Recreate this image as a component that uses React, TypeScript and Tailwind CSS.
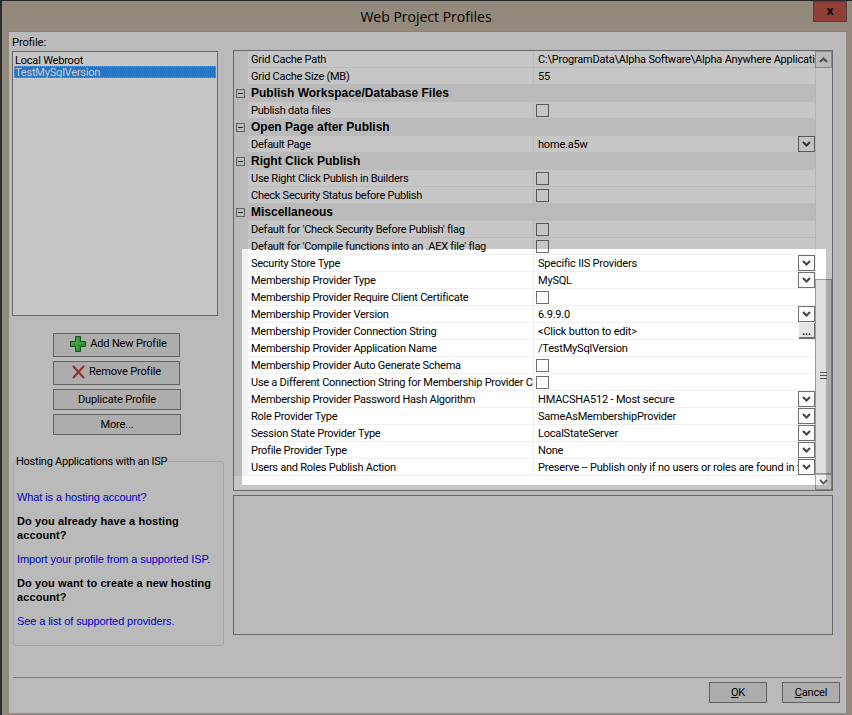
const ui = "font-['Roboto',sans-serif]";

type Row =
  | { kind: 'cat'; label: string }
  | { kind: 'prop'; label: string; value?: string; control?: 'check' | 'drop' | 'dots' };

const rows: Row[] = [
  { kind: 'prop', label: 'Grid Cache Path', value: 'C:\\ProgramData\\Alpha Software\\Alpha Anywhere Application Server' },
  { kind: 'prop', label: 'Grid Cache Size (MB)', value: '55' },
  { kind: 'cat', label: 'Publish Workspace/Database Files' },
  { kind: 'prop', label: 'Publish data files', control: 'check' },
  { kind: 'cat', label: 'Open Page after Publish' },
  { kind: 'prop', label: 'Default Page', value: 'home.a5w', control: 'drop' },
  { kind: 'cat', label: 'Right Click Publish' },
  { kind: 'prop', label: 'Use Right Click Publish in Builders', control: 'check' },
  { kind: 'prop', label: 'Check Security Status before Publish', control: 'check' },
  { kind: 'cat', label: 'Miscellaneous' },
  { kind: 'prop', label: "Default for 'Check Security Before Publish' flag", control: 'check' },
  { kind: 'prop', label: "Default for 'Compile functions into an .AEX file' flag", control: 'check' },
  { kind: 'prop', label: 'Security Store Type', value: 'Specific IIS Providers', control: 'drop' },
  { kind: 'prop', label: 'Membership Provider Type', value: 'MySQL', control: 'drop' },
  { kind: 'prop', label: 'Membership Provider Require Client Certificate', control: 'check' },
  { kind: 'prop', label: 'Membership Provider Version', value: '6.9.9.0', control: 'drop' },
  { kind: 'prop', label: 'Membership Provider Connection String', value: '<Click button to edit>', control: 'dots' },
  { kind: 'prop', label: 'Membership Provider Application Name', value: '/TestMySqlVersion' },
  { kind: 'prop', label: 'Membership Provider Auto Generate Schema', control: 'check' },
  { kind: 'prop', label: 'Use a Different Connection String for Membership Provider Configuration', control: 'check' },
  { kind: 'prop', label: 'Membership Provider Password Hash Algorithm', value: 'HMACSHA512 - Most secure', control: 'drop' },
  { kind: 'prop', label: 'Role Provider Type', value: 'SameAsMembershipProvider', control: 'drop' },
  { kind: 'prop', label: 'Session State Provider Type', value: 'LocalStateServer', control: 'drop' },
  { kind: 'prop', label: 'Profile Provider Type', value: 'None', control: 'drop' },
  { kind: 'prop', label: 'Users and Roles Publish Action', value: 'Preserve -- Publish only if no users or roles are found in the database', control: 'drop' },
];

function Chevron({ up = false, color = '#444' }: { up?: boolean; color?: string }) {
  return (
    <svg width="9" height="6" viewBox="0 0 9 6" className={up ? 'rotate-180' : ''}>
      <path d="M1 1 L4.5 4.5 L8 1" fill="none" stroke={color} strokeWidth="2" />
    </svg>
  );
}

function PropRow({ row }: { row: Row }) {
  if (row.kind === 'cat') {
    return (
      <div className="flex h-[17px] bg-[#f0f0f0]">
        <div className="flex w-[14px] shrink-0 items-center justify-center pr-[1px]">
          <div className="flex h-[9px] w-[9px] items-center justify-center border border-[#808080]">
            <div className="h-[1px] w-[5px] bg-[#222]" />
          </div>
        </div>
        <div className="truncate pl-[3px] font-['Liberation_Sans',sans-serif] text-[12px] font-bold leading-[16px] text-black">
          {row.label}
        </div>
      </div>
    );
  }
  return (
    <div className="flex h-[17px]">
      <div className="w-[14px] shrink-0 bg-[#f0f0f0]" />
      <div className="flex min-w-0 flex-1 border-b border-[#f0f0f0] bg-white">
        <div className="w-[286px] shrink-0 overflow-hidden whitespace-nowrap border-r border-[#f0f0f0] pl-[3px] text-[11px] leading-[18px] tracking-[-0.25px] text-black">
          {row.label}
        </div>
        <div className="flex min-w-0 flex-1 items-start pl-[3px]">
          {row.control === 'check' ? (
            <div className="ml-[-1px] mt-[2px] h-[13px] w-[13px] border border-[#707070] bg-white" />
          ) : (
            <div className="min-w-0 flex-1 overflow-hidden whitespace-nowrap pl-[1px] text-[11px] leading-[18px] tracking-[-0.2px] text-black [font-variant-ligatures:none]">
              {row.value}
            </div>
          )}
          {row.control === 'drop' && (
            <div className="flex h-[16px] w-[17px] shrink-0 items-center justify-center border border-[#707070] bg-[#fbfbfb]">
              <Chevron />
            </div>
          )}
          {row.control === 'dots' && (
            <div className="flex h-[16px] w-[16px] shrink-0 items-end justify-center border-b-2 border-r border-[#707070] bg-[#e4e4e4] pb-[2px] text-[10px] font-bold leading-[6px]">
              ...
            </div>
          )}
        </div>
      </div>
    </div>
  );
}

function PlusIcon() {
  return (
    <svg width="16" height="16" viewBox="0 0 16 16">
      <path d="M5.5 .5h5v5h5v5h-5v5h-5v-5h-5v-5h5z" fill="#3cb83c" stroke="#1f6f1f" />
      <path d="M7 2v11M2 7h11" stroke="#76dc76" strokeWidth="1" />
    </svg>
  );
}

function CrossIcon() {
  return (
    <svg width="13" height="14" viewBox="0 0 13 14">
      <path d="M1 1 L12 13 M12 1 L1 13" stroke="#b9413a" strokeWidth="2.2" />
    </svg>
  );
}

function Btn({ children, className = '' }: { children: React.ReactNode; className?: string }) {
  return (
    <div className={`flex items-center justify-center border border-[#7f7f7f] bg-[#dfdfdf] text-[11px] tracking-[-0.15px] text-black ${className}`}>
      {children}
    </div>
  );
}

export default function App() {
  return (
    <div className={`relative flex h-[715px] w-[852px] flex-col overflow-hidden border-l-2 border-t border-[#2a2a2a] bg-[#bfb1a1] ${ui}`}>
      {/* Title bar */}
      <div className="relative flex h-[30px] shrink-0 items-center justify-center pr-[2px] font-['Open_Sans',sans-serif] text-[14px] text-black">
        Web Project Profiles
        <div className="absolute right-[5px] top-0 flex h-[21px] w-[34px] items-center justify-center border border-[#5a5a5a] bg-[#ba5246] pb-[2px] font-['Liberation_Sans',sans-serif] text-[13px] font-bold text-black">
          x
        </div>
      </div>

      {/* Client area */}
      <div className="mb-[2px] ml-[7px] mr-[6px] flex min-h-0 flex-1 flex-col border-t border-[#aaa] bg-[#f0f0f0]">
        <div className="flex min-h-0 flex-1 pl-[3px] pt-[4px]">
          {/* Left column */}
          <div className="flex w-[206px] shrink-0 flex-col">
            <div className="h-[15px] text-[11px] leading-[14px] text-black">Profile:</div>
            <div className="h-[265px] border border-[#828790] bg-white px-[1px] pt-[2px] text-[11px] leading-[14px] tracking-[-0.2px]">
              <div className="h-[12px] pl-[1px] text-black">Local Webroot</div>
              <div className="h-[12px] bg-[#3399ff] pl-[1px] text-white outline-1 -outline-offset-1 outline-dotted outline-[#e7a85f]">
                TestMySqlVersion
              </div>
            </div>
            <div className="ml-[41px] mt-[17px] flex w-[128px] flex-col">
              <Btn className="h-[24px] w-[127px] gap-[4px] pl-[4px] pb-[2px]"><PlusIcon />Add New Profile</Btn>
              <Btn className="mt-[4px] h-[24px] w-[127px] gap-[4px] pb-[2px]"><CrossIcon />Remove Profile</Btn>
              <Btn className="mt-[4px] h-[21px] pt-[2px]">Duplicate Profile</Btn>
              <Btn className="mt-[4px] h-[21px] pt-[2px]">More...</Btn>
            </div>
            <div className="relative ml-[1px] mt-[26px] h-[185px] w-[211px] rounded-[3px] border border-[#d0d8dc] px-[3px] font-['Liberation_Sans',sans-serif] text-[11px] leading-[14px]">
              <div className="absolute left-[2px] top-[-7px] bg-[#f0f0f0] pr-[1px] font-['Roboto',sans-serif] tracking-[-0.25px] text-black">
                Hosting Applications with an ISP
              </div>
              <p className="mt-[28px] tracking-[-0.1px] text-[#0000ff]">What is a hosting account?</p>
              <p className="mt-[10px] font-bold tracking-[0.1px] text-black">Do you already have a hosting account?</p>
              <p className="mt-[10px] tracking-[-0.1px] text-[#0000ff]">Import your profile from a supported ISP.</p>
              <p className="mt-[10px] font-bold tracking-[0.1px] text-black">Do you want to create a new hosting account?</p>
              <p className="mt-[10px] tracking-[-0.1px] text-[#0000ff]">See a list of supported providers.</p>
            </div>
          </div>

          {/* Right column */}
          <div className="ml-[15px] mt-[14px] flex w-[600px] shrink-0 flex-col">
            <div className="flex h-[441px] border border-[#828790] bg-white">
              <div className="flex min-w-0 flex-1 flex-col">
                {rows.map((r) => (
                  <PropRow key={r.label} row={r} />
                ))}
              </div>
              <div className="flex w-[17px] shrink-0 flex-col">
                <div className="flex h-[17px] items-center justify-center border border-[#b4b4b4] bg-[#f0f0f0]">
                  <Chevron up color="#666" />
                </div>
                <div className="h-[211px] border-l border-[#e8e8e8]" />
                <div className="flex h-[195px] flex-col items-center justify-center gap-[2px] border border-[#9a9a9a] pb-[2px] bg-[#dedede]">
                  <div className="h-[1px] w-[7px] bg-[#555]" />
                  <div className="h-[1px] w-[7px] bg-[#555]" />
                  <div className="h-[1px] w-[7px] bg-[#555]" />
                </div>
                <div className="flex flex-1 items-center justify-center border border-[#a8a8a8] bg-[#f0f0f0]">
                  <Chevron color="#666" />
                </div>
              </div>
            </div>
            <div className="mt-[4px] h-[140px] border border-[#828790] bg-[#f0f0f0]" />
          </div>
        </div>

        {/* Footer */}
        <div className="mx-[4px] flex h-[36px] shrink-0 items-start justify-end gap-[15px] border-t border-[#a0a0a0] pr-[2px] pt-[4px]">
          <Btn className="h-[21px] w-[58px] pt-[1px]"><span><u>O</u>K</span></Btn>
          <Btn className="h-[21px] w-[58px] pt-[1px]"><span><u>C</u>ancel</span></Btn>
        </div>
      </div>

      {/* Highlight: everything outside this rectangle is dimmed */}
      <div className="pointer-events-none absolute left-[240px] top-[248px] h-[236px] w-[584px] shadow-[0_0_0_1200px_rgba(0,0,0,0.225)]" />
    </div>
  );
}
